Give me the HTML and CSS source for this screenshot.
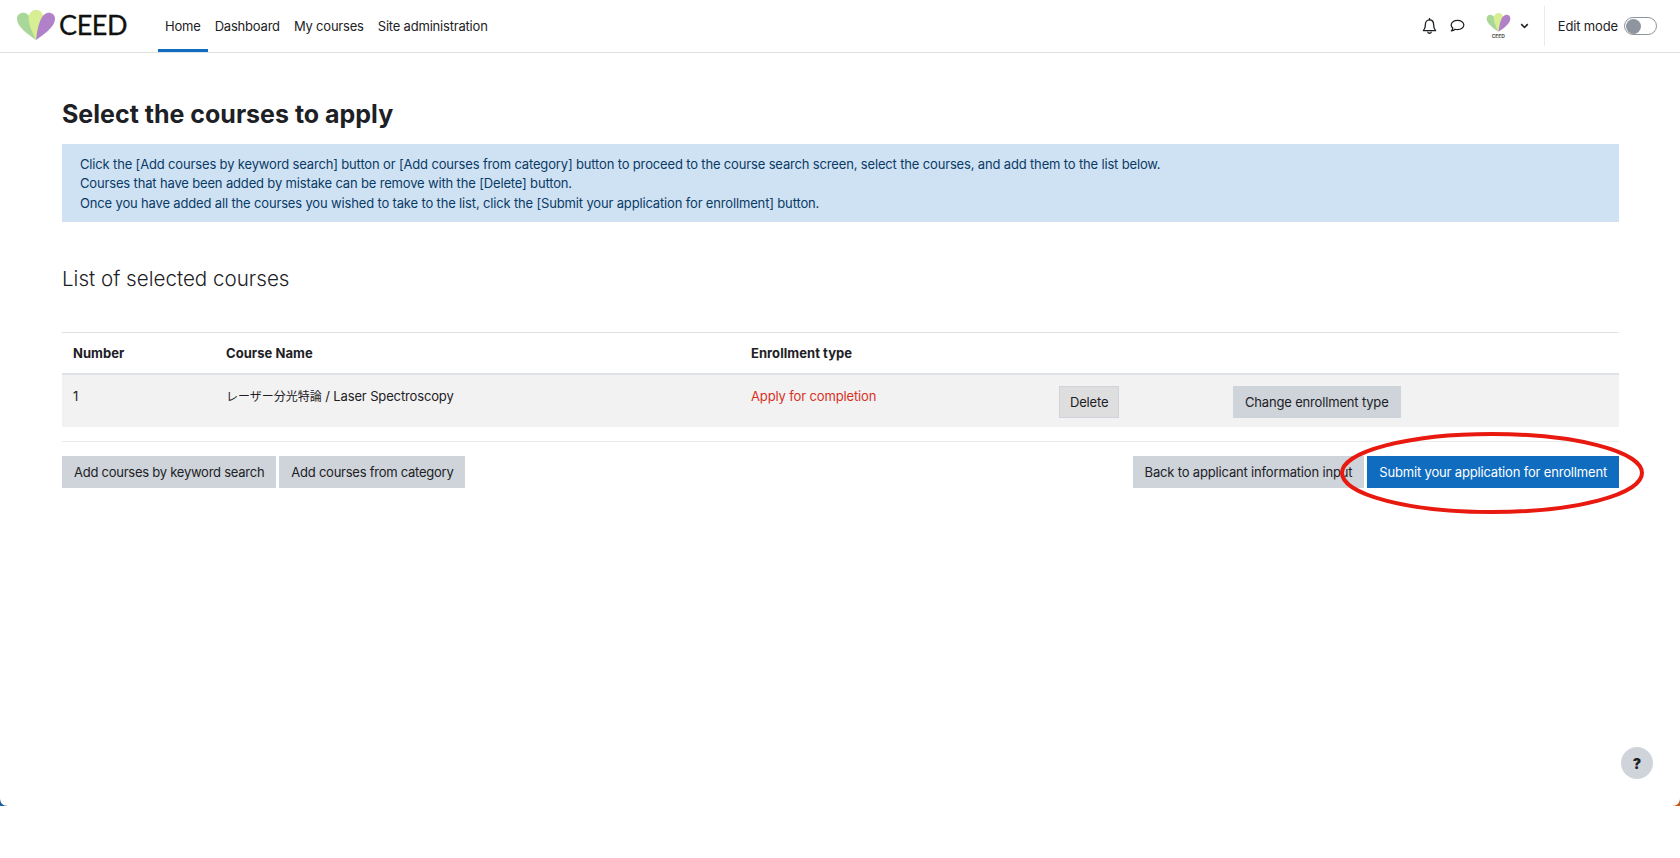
FILE: index.html
```html
<!DOCTYPE html>
<html>

<head>
    <meta charset="utf-8">
    <title>Select the courses to apply</title>
    <link rel="stylesheet" href="styles.css">
</head>

<body>
    <header class="navbar">
        <a class="brand">
            <svg class="brandIcon" viewBox="0 0 40 32" width="40" height="32">
                <path d="M20 30 C13 25 1 17 1 9 C1 4 5 2 9 3 C15 5 18 14 20 30Z" fill="#a9d79a"/>
                <path d="M20 30 C15 20 11 10 13 5 C15 1 17 0 20 0 C23 0 25 1 27 5 C29 10 25 20 20 30Z" fill="#d8ee93"/>
                <path d="M20 30 C22 14 25 5 31 3 C35 2 39 4 39 9 C39 17 27 25 20 30Z" fill="#b080c8"/>
            </svg>
            <span class="brandText">CEED</span>
        </a>
        <nav class="primaryNav">
            <a class="navItem active">Home</a>
            <a class="navItem">Dashboard</a>
            <a class="navItem">My courses</a>
            <a class="navItem">Site administration</a>
        </nav>
        <div class="userNav">
            <svg class="navIcon" viewBox="0 0 16 18" width="15" height="17">
                <path d="M8 2 C5 2 3.6 4.2 3.6 7 C3.6 10.5 2.6 12 1.5 13.4 L14.5 13.4 C13.4 12 12.4 10.5 12.4 7 C12.4 4.2 11 2 8 2Z" fill="none" stroke="#1d2125" stroke-width="1.4" stroke-linejoin="round"/>
                <path d="M8 .5 V2 M6.2 15 C6.6 16.6 9.4 16.6 9.8 15" fill="none" stroke="#1d2125" stroke-width="1.4" stroke-linecap="round"/>
            </svg>
            <svg class="navIcon chat" viewBox="0 0 16 15" width="15" height="14">
                <path d="M8 1.5 C4.2 1.5 1.2 3.6 1.2 6.4 C1.2 7.7 1.9 8.8 3 9.7 C2.8 10.9 2.2 11.9 1.4 12.8 C3 12.7 4.5 12 5.4 11 C6.2 11.2 7.1 11.3 8 11.3 C11.8 11.3 14.8 9.2 14.8 6.4 C14.8 3.6 11.8 1.5 8 1.5Z" fill="none" stroke="#1d2125" stroke-width="1.3" stroke-linejoin="round"/>
            </svg>
            <div class="avatar">
                <svg viewBox="0 0 40 32" width="25" height="20">
                    <path d="M20 30 C13 25 1 17 1 9 C1 4 5 2 9 3 C15 5 18 14 20 30Z" fill="#a9d79a"/>
                    <path d="M20 30 C15 20 11 10 13 5 C15 1 17 0 20 0 C23 0 25 1 27 5 C29 10 25 20 20 30Z" fill="#d8ee93"/>
                    <path d="M20 30 C22 14 25 5 31 3 C35 2 39 4 39 9 C39 17 27 25 20 30Z" fill="#b080c8"/>
                </svg>
                <span class="avatarText">CEED</span>
            </div>
            <svg class="caret" viewBox="0 0 10 7" width="9" height="6">
                <path d="M1.2 1.4 L5 5.2 L8.8 1.4" fill="none" stroke="#1d2125" stroke-width="1.9"/>
            </svg>
            <div class="divider"></div>
            <span class="editLabel">Edit mode</span>
            <div class="toggle"><div class="knob"></div></div>
        </div>
    </header>

    <main class="page">
        <h1>Select the courses to apply</h1>
        <div class="alertInfo">
            Click the [Add courses by keyword search] button or [Add courses from category] button to proceed to the course search screen, select the courses, and add them to the list below.<br>
            Courses that have been added by mistake can be remove with the [Delete] button.<br>
            Once you have added all the courses you wished to take to the list, click the [Submit your application for enrollment] button.
        </div>

        <h3>List of selected courses</h3>

        <table class="courseTable">
            <thead>
                <tr>
                    <th class="colNumber">Number</th>
                    <th class="colName">Course Name</th>
                    <th class="colType">Enrollment type</th>
                    <th class="colDelete"></th>
                    <th></th>
                </tr>
            </thead>
            <tbody>
                <tr>
                    <td>1</td>
                    <td><span class="jpName">レーザー分光特論</span> / Laser Spectroscopy</td>
                    <td class="typeText">Apply for completion</td>
                    <td><button class="btn btnDelete">Delete</button></td>
                    <td><button class="btn">Change enrollment type</button></td>
                </tr>
            </tbody>
        </table>

        <div class="actions">
            <div class="actionGroup">
                <button class="btn btnTight">Add courses by keyword search</button>
                <button class="btn btnTight">Add courses from category</button>
            </div>
            <div class="actionGroup">
                <button class="btn">Back to applicant information input</button>
                <button class="btn btnPrimary">Submit your application for enrollment</button>
            </div>
        </div>
    </main>

    <svg class="circleMark" viewBox="0 0 306 84" width="306" height="84">
        <ellipse cx="153" cy="42" rx="150" ry="39" fill="none" stroke="#e8190f" stroke-width="4"/>
    </svg>

    <button class="helpBtn">?</button>

    <svg class="cornerL" viewBox="0 0 8 8" width="8" height="8"><path d="M0 0 C0 5 3 8 8 8 L0 8Z" fill="#1f5f9e"/></svg>
    <svg class="cornerR" viewBox="0 0 8 8" width="8" height="8"><path d="M8 0 C8 5 5 8 0 8 L8 8Z" fill="#c8551c"/></svg>
</body>

</html>
```

FILE: styles.css
```css
html {
    padding: 0;
    margin: 0;
}

body {
    margin: 0;
    background-color: #fff;
    font-family: Inter, "Noto Sans CJK JP", sans-serif;
    font-size: 13px;
    letter-spacing: -0.14px;
    line-height: 21px;
    color: #1d2125;
    height: 858px;
    position: relative;
    overflow: hidden;
}

/* top bar */
.navbar {
    height: 52px;
    border-bottom: 1px solid #dee2e6;
    display: flex;
    align-items: center;
    padding-left: 16px;
    padding-right: 23px;
}

.brand {
    display: flex;
    align-items: center;
    width: 142px;
}

.brandText {
    font-family: Lato, sans-serif;
    font-size: 27px;
    line-height: 30px;
    color: #111;
    margin-left: 3px;
    margin-bottom: 2px;
    letter-spacing: -0.4px;
    -webkit-text-stroke: 0.3px #111;
}

.primaryNav {
    display: flex;
    height: 100%;
}

.navItem {
    padding: 0 7px;
    line-height: 52px;
    height: 52px;
    box-sizing: border-box;
    letter-spacing: -0.2px;
}

.navItem.active {
    border-bottom: 3px solid #0f6cbf;
}

.userNav {
    margin-left: auto;
    display: flex;
    align-items: center;
}

.chat {
    margin-left: 13px;
}

.avatar {
    margin-left: 21px;
    display: flex;
    flex-direction: column;
    align-items: center;
    width: 25px;
}

.avatarText {
    font-size: 5px;
    line-height: 6px;
    font-weight: bold;
    color: #555;
}

.caret {
    margin-left: 9px;
}

.divider {
    width: 1px;
    height: 40px;
    background-color: #e9ecef;
    margin-left: 15px;
    margin-right: 13px;
}

.toggle {
    height: 16px;
    border: 1px solid #8f959e;
    border-radius: 9px;
    margin-left: 6px;
    display: flex;
    align-items: center;
    padding-left: 1px;
    width: 30px;
}

.knob {
    width: 15px;
    height: 15px;
    border-radius: 50%;
    background-color: #8f959e;
}

/* page content */
.page {
    padding: 0 61px 0 62px;
}

h1 {
    margin: 42px 0 0 0;
    font-size: 25px;
    letter-spacing: 0;
    line-height: 39px;
    font-weight: 700;
}

.alertInfo {
    margin-top: 10px;
    height: 78px;
    box-sizing: border-box;
    padding: 11px 18px 9px;
    background-color: #cfe2f3;
    color: #0a3a66;
    line-height: 19.3px;
    letter-spacing: -0.158px;
}

h3 {
    margin: 43px 0 0 0;
    font-size: 20.6px;
    letter-spacing: 0;
    line-height: 28px;
    font-weight: 300;
}

.courseTable {
    margin-top: 39px;
    width: 100%;
    border-collapse: collapse;
    table-layout: fixed;
    border-top: 1px solid #dee2e6;
}

.courseTable th {
    text-align: left;
    padding: 10px 11px 9px;
    height: 41px;
    box-sizing: border-box;
    border-bottom: 2px solid #dee2e6;
    font-weight: 700;
    letter-spacing: 0.05px;
}

.courseTable td {
    padding: 11px 11px 9px;
    height: 53px;
    box-sizing: border-box;
    vertical-align: top;
    background-color: #f2f2f2;
}

.colNumber {
    width: 153px;
}

.colName {
    width: 525px;
}

.colType {
    width: 308px;
}

.colDelete {
    width: 174px;
}

.jpName {
    font-size: 12px;
    letter-spacing: 0;
}

.typeText {
    color: #d9301f;
}

.btn {
    font-family: inherit;
    font-size: 13px;
    letter-spacing: -0.17px;
    line-height: 21px;
    color: #1d2125;
    background-color: #ced4da;
    border: 1px solid #ced4da;
    padding: 5px 11px;
    height: 32px;
    margin: 0;
    white-space: nowrap;
}

.btnTight {
    letter-spacing: -0.25px;
}

.btnDelete {
    background-color: #dedede;
    padding: 5px 10px;
}

.btnPrimary {
    background-color: #0f6cbf;
    border-color: #0f6cbf;
    color: #fff;
}

.actions {
    margin-top: 14px;
    border-top: 1px solid #e9ecef;
    padding-top: 14px;
    display: flex;
    justify-content: space-between;
}

.actionGroup {
    display: flex;
    gap: 3px;
}

/* things lying over the page */
.circleMark {
    position: absolute;
    left: 1339px;
    top: 431px;
}

.helpBtn {
    position: absolute;
    left: 1621px;
    top: 747px;
    width: 32px;
    height: 32px;
    border-radius: 50%;
    border: 0;
    padding: 0;
    background-color: #ced4da;
    font-family: inherit;
    font-size: 14px;
    font-weight: 900;
    color: #1d2125;
}

.cornerL {
    position: absolute;
    left: 0;
    top: 798px;
}

.cornerR {
    position: absolute;
    right: 0;
    top: 798px;
}
```
